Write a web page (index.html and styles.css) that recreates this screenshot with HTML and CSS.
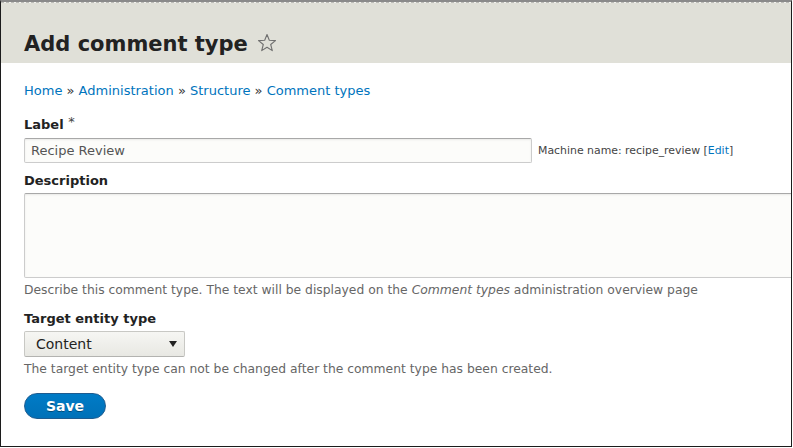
FILE: index.html
```html
<!DOCTYPE html>
<html>
<head>
<meta charset="utf-8">
<link rel="stylesheet" href="styles.css">
</head>
<body>
<div class="frame">
  <div class="dots"></div>
  <header class="header">
    <h1 class="title">Add comment type
      <svg class="star" width="20" height="20" viewBox="0 0 20 20"><path d="M10 1.5 L12.3 7.3 L18.5 7.6 L13.7 11.5 L15.3 17.6 L10 14.2 L4.7 17.6 L6.3 11.5 L1.5 7.6 L7.7 7.3 Z" fill="none" stroke="#707070" stroke-width="1.1" stroke-linejoin="round"/></svg>
    </h1>
  </header>
  <main class="content">
    <nav class="crumbs"><a>Home</a> » <a>Administration</a> » <a>Structure</a> » <a>Comment types</a></nav>
    <div class="field">
      <label class="label">Label <span class="req">*</span></label>
      <div class="row">
        <div class="input">Recipe Review</div>
        <span class="machine">Machine name: recipe_review [<a>Edit</a>]</span>
      </div>
    </div>
    <div class="field f-desc">
      <label class="label">Description</label>
      <div class="textarea"></div>
      <div class="help">Describe this comment type. The text will be displayed on the <em>Comment types</em> administration overview page</div>
    </div>
    <div class="field f-target">
      <label class="label">Target entity type</label>
      <div class="select"><span>Content</span><span class="arrow"></span></div>
      <div class="help">The target entity type can not be changed after the comment type has been created.</div>
    </div>
    <div class="actions"><span class="button">Save</span></div>
  </main>
</div>
</body>
</html>
```
FILE: styles.css
```css
html, body { margin: 0; padding: 0; background: #fff; }
body { font-family: "DejaVu Sans", sans-serif; color: #222; }
.frame {
  width: 792px; height: 447px; box-sizing: border-box;
  border-left: 1px solid #1c1c1c; border-right: 1px solid #1c1c1c; border-bottom: 1px solid #1c1c1c;
  border-top: 2px solid #8a8a8a;
  overflow: hidden; background: #fff;
}
.dots {
  height: 1px;
  background: repeating-linear-gradient(90deg, #bdbdb8 0 3px, #f4f4f0 3px 5px);
}
.header {
  background: #e0e0d8; height: 60px; box-sizing: border-box;
  padding: 28px 0 0 23px;
}
.title {
  margin: 0; font-size: 21px; line-height: 26px; font-weight: bold; color: #222;
  display: flex; align-items: center; gap: 9px;
}
.star { margin-top: -2px; }
.content { padding: 0 0 0 23px; }
a { color: #0074bd; text-decoration: none; }
.crumbs { margin-top: 19px; font-size: 13px; line-height: 18px; color: #333; }
.field { margin-top: 16px; }
.label { display: block; font-size: 13px; font-weight: bold; line-height: 18px; margin-bottom: 4px; color: #222; }
.req { color: #444; font-weight: normal; font-size: 13px; line-height: 0; vertical-align: 3px; }
.row { display: flex; align-items: center; gap: 6px; }
.input {
  width: 508px; height: 25px; box-sizing: border-box;
  border: 1px solid #ccc; border-top-color: #a8a8a8; border-radius: 2px;
  background: #fcfcfa; box-shadow: inset 0 1px 2px rgba(0,0,0,0.08);
  font-size: 13px; line-height: 23px; padding: 0 6px; color: #555;
}
.machine { font-size: 10.9px; color: #444; }
.f-desc { margin-top: 9px; }
.f-desc .label { margin-bottom: 3px; }
.textarea {
  width: 800px; height: 85px; box-sizing: border-box;
  border: 1px solid #ccc; border-top-color: #a8a8a8; border-radius: 2px;
  background: #fcfcfa; box-shadow: inset 0 1px 2px rgba(0,0,0,0.08);
}
.help { font-size: 12.33px; line-height: 16px; color: #666; margin-top: 4px; }
.f-target { margin-top: 12px; }
.f-target .label { margin-bottom: 3px; }
.select {
  width: 161px; height: 26px; box-sizing: border-box;
  border: 1px solid #c8c8c4; border-bottom-color: #b3b3b0; border-radius: 2px;
  background: linear-gradient(#f6f6f3, #e8e8e3);
  display: flex; align-items: center; justify-content: space-between;
  padding: 0 7px 0 11px; font-size: 14px; color: #222;
}
.arrow {
  width: 0; height: 0; border-left: 4px solid transparent; border-right: 4px solid transparent;
  border-top: 6px solid #222;
}
.actions { margin-top: 16px; }
.button {
  display: inline-flex; align-items: center; justify-content: center;
  width: 82px; height: 26px; box-sizing: border-box;
  border: 1px solid #1e5c90; border-radius: 20px;
  background: linear-gradient(#007bc6, #0071b8);
  color: #fff; font-weight: bold; font-size: 14px;
  text-shadow: 0 1px 0 rgba(0,0,0,0.35);
}
```
